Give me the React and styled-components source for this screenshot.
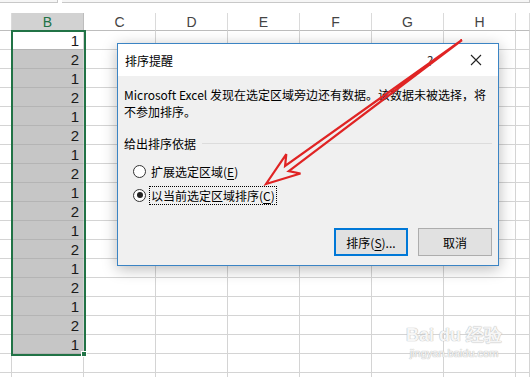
import React from "react";
import styled, { createGlobalStyle } from "styled-components";

const green = "#217346";
const grid = "#d4d4d4";
const cjk = `"Noto Sans CJK SC", "Noto Sans", sans-serif`;

const GlobalStyle = createGlobalStyle`
  body {
    margin: 0;
    background: #fff;
  }
  * {
    box-sizing: border-box;
  }
`;

const Page = styled.div`
  position: relative;
  width: 530px;
  height: 377px;
  overflow: hidden;
  background: #fff;
  font-family: ${cjk};
`;

const FormulaEdge = styled.div`
  display: flex;
  gap: 4px;
  height: 13px;
`;

const EdgeBox = styled.div`
  flex: ${({ $grow }) => ($grow ? 1 : "0 0 58px")};
  height: 3px;
  background: #f6f6f6;
  border-bottom: 1px solid #c8c8c8;
  border-right: 1px solid #c8c8c8;
`;

const Sheet = styled.div`
  display: grid;
  grid-template-columns: 12px repeat(7, 72px) 1fr;
  grid-template-rows: 18px;
  grid-auto-rows: 19px;
`;

const ColHead = styled.div`
  display: flex;
  align-items: center;
  justify-content: center;
  font-family: "Liberation Sans", Arial, sans-serif;
  font-size: 14px;
  color: ${({ $selected }) => ($selected ? green : "#444")};
  background: ${({ $selected }) => ($selected ? "#d2d2d2" : "#fff")};
  border-right: 1px solid ${({ $selected }) => ($selected ? "#bdbdbd" : "#dadada")};
  border-bottom: 1px solid #bdbdbd;
`;

const Cell = styled.div`
  display: flex;
  align-items: center;
  justify-content: flex-end;
  padding: 1px 4px 0 0;
  font-family: "Liberation Sans", Arial, sans-serif;
  font-size: 15px;
  color: #1a1a1a;
  background: ${({ $selected, $active }) =>
    $selected && !$active ? "#c6c6c6" : "#fff"};
  border-right: 1px solid ${grid};
  border-bottom: 1px solid ${({ $selected }) => ($selected ? "#b4b4b4" : grid)};
`;

const Selection = styled.div`
  position: absolute;
  left: 11px;
  top: 30px;
  width: 75px;
  height: 326px;
  border: 2px solid ${green};
  pointer-events: none;
`;

const FillHandle = styled.div`
  position: absolute;
  left: 81px;
  top: 351px;
  width: 6px;
  height: 6px;
  background: ${green};
  border: 1px solid #fff;
`;

const Dialog = styled.div`
  position: absolute;
  left: 117px;
  top: 43px;
  width: 382px;
  height: 223px;
  display: flex;
  flex-direction: column;
  background: #f0f0f0;
  border: 1px solid #3b84c4;
  box-shadow: 0 3px 14px rgba(0, 0, 0, 0.28);
  font-size: 12px;
  color: #000;
`;

const TitleBar = styled.div`
  display: flex;
  align-items: center;
  height: 32px;
  padding-left: 7px;
  background: #fff;
`;

const Title = styled.span`
  flex: 1;
  font-size: 12px;
`;

const TitleButton = styled.span`
  display: flex;
  align-items: center;
  justify-content: center;
  width: ${({ $w }) => $w}px;
  height: 32px;
  font-size: 13px;
  color: #333;
`;

const Body = styled.div`
  flex: 1;
  display: flex;
  flex-direction: column;
  padding: 10px 6px 9px 6px;
`;

const Message = styled.p`
  margin: 0;
  line-height: 17px;
`;

const GroupHead = styled.div`
  display: flex;
  align-items: center;
  gap: 6px;
  margin-top: 15px;
  height: 17px;
  line-height: 17px;
`;

const GroupRule = styled.div`
  flex: 1;
  height: 1px;
  background: #dcdcdc;
`;

const Options = styled.div`
  display: flex;
  flex-direction: column;
  gap: 4px;
  margin: 9px 0 0 9px;
`;

const Option = styled.label`
  display: flex;
  align-items: center;
  gap: 3px;
  height: 20px;
`;

const Radio = styled.span`
  position: relative;
  width: 13px;
  height: 13px;
  border: 1px solid #333;
  border-radius: 50%;
  background: #fff;

  &::after {
    content: "";
    display: ${({ $checked }) => ($checked ? "block" : "none")};
    position: absolute;
    left: 2.5px;
    top: 2.5px;
    width: 6px;
    height: 6px;
    border-radius: 50%;
    background: #222;
  }
`;

const OptionText = styled.span`
  padding: 0 1px;
  line-height: 17px;
  border: 1px dotted ${({ $focus }) => ($focus ? "#000" : "transparent")};
`;

const Key = styled.u`
  text-underline-offset: 2px;
`;

const Buttons = styled.div`
  margin-top: auto;
  display: flex;
  justify-content: flex-end;
  gap: 10px;
`;

const Button = styled.button`
  width: 74px;
  height: 28px;
  padding: 0;
  font-family: ${cjk};
  font-size: 12px;
  color: #000;
  background: #e1e1e1;
  border: ${({ $default }) => ($default ? "2px solid #0078d7" : "1px solid #adadad")};
`;

const Watermark = styled.div`
  position: absolute;
  left: 406px;
  top: 324px;
  display: flex;
  flex-direction: column;
  align-items: center;
  white-space: nowrap;
  color: #f6f6f6;
  text-shadow: 0 0 1px #b8b8b8, 0 0 1px #b8b8b8;
  font-family: "Liberation Sans", Arial, sans-serif;
  pointer-events: none;
`;

const MarkLogo = styled.span`
  font-size: 18px;
  line-height: 22px;
  font-weight: bold;
`;

const MarkUrl = styled.span`
  font-size: 11px;
  line-height: 14px;
`;

const Overlay = styled.svg`
  position: absolute;
  left: 0;
  top: 0;
  pointer-events: none;
`;

const columns = ["", "B", "C", "D", "E", "F", "G", "H", ""];
const rowCount = 19;

// hollow red arrow, tip on the second option
const tip = [266, 184];
const tail = [462, 40];
const dx = tail[0] - tip[0];
const dy = tail[1] - tip[1];
const len = Math.hypot(dx, dy);
const u = [dx / len, dy / len];
const n = [-u[1], u[0]];
const at = (a, b) => [tip[0] + u[0] * a + n[0] * b, tip[1] + u[1] * a + n[1] * b];
const arrowPts = [
  at(0, 0),
  at(34, 12),
  at(26, 3.2),
  at(len, 0),
  at(26, -3.2),
  at(34, -12),
]
  .map((p) => p.map((v) => v.toFixed(1)).join(","))
  .join(" ");

export default function App() {
  return (
    <Page>
      <GlobalStyle />
      <FormulaEdge>
        <EdgeBox />
        <EdgeBox $grow />
      </FormulaEdge>
      <Sheet>
        {columns.map((c, i) => (
          <ColHead key={"h" + i} $selected={c === "B"}>
            {c}
          </ColHead>
        ))}
        {Array.from({ length: rowCount }).map((_, r) =>
          columns.map((c, i) => {
            const inB = c === "B" && r < 17;
            return (
              <Cell key={r + "-" + i} $selected={inB} $active={inB && r === 0}>
                {inB ? (r % 2 === 0 ? 1 : 2) : ""}
              </Cell>
            );
          })
        )}
      </Sheet>
      <Selection />
      <FillHandle />

      <Dialog>
        <TitleBar>
          <Title>排序提醒</Title>
          <TitleButton $w={48}>?</TitleButton>
          <TitleButton $w={44}>
            <svg width="12" height="12" viewBox="0 0 12 12">
              <path d="M1 1 L11 11 M11 1 L1 11" stroke="#222" strokeWidth="1.1" />
            </svg>
          </TitleButton>
        </TitleBar>
        <Body>
          <Message>
            Microsoft Excel 发现在选定区域旁边还有数据。该数据未被选择，将
            <br />
            不参加排序。
          </Message>
          <GroupHead>
            给出排序依据
            <GroupRule />
          </GroupHead>
          <Options>
            <Option>
              <Radio />
              <OptionText>
                扩展选定区域(<Key>E</Key>)
              </OptionText>
            </Option>
            <Option>
              <Radio $checked />
              <OptionText $focus>
                以当前选定区域排序(<Key>C</Key>)
              </OptionText>
            </Option>
          </Options>
          <Buttons>
            <Button $default>
              排序(<Key>S</Key>)...
            </Button>
            <Button>取消</Button>
          </Buttons>
        </Body>
      </Dialog>

      <Watermark>
        <MarkLogo>Bai du 经验</MarkLogo>
        <MarkUrl>jingyan.baidu.com</MarkUrl>
      </Watermark>

      <Overlay width="530" height="377">
        <polygon
          points={arrowPts}
          fill="none"
          stroke="#e02424"
          strokeWidth="2.2"
          strokeLinejoin="miter"
        />
      </Overlay>
    </Page>
  );
}
